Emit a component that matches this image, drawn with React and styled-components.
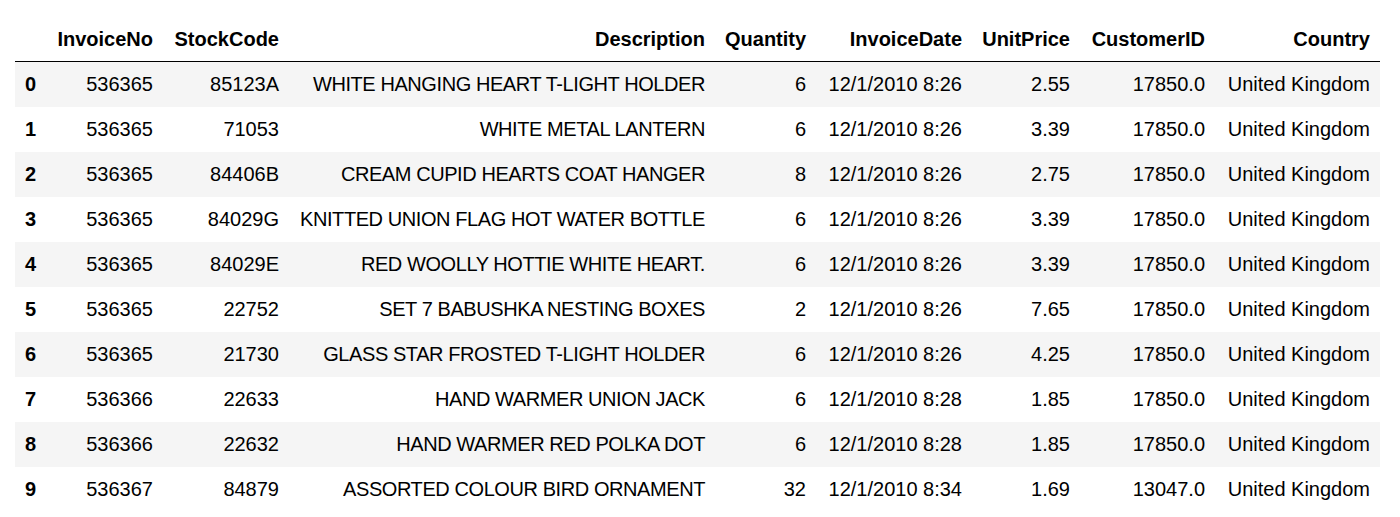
import React from "react";
import styled, { createGlobalStyle } from "styled-components";

const GlobalStyle = createGlobalStyle`
  html, body { margin: 0; padding: 0; background: #fff; }
  body { font-family: "Liberation Sans", Arial, Helvetica, sans-serif; color: #000; }
`;

const Page = styled.div`
  padding: 17px 20px 0 15px;
`;

const Table = styled.table`
  border-collapse: collapse;
  border-spacing: 0;
  table-layout: fixed;
  width: 1365px;
  font-size: 20px;
  color: #000;
`;

const HeadCell = styled.th`
  height: 44px;
  padding: 0 10px;
  text-align: right;
  font-weight: bold;
  vertical-align: middle;
  white-space: nowrap;
  border-bottom: 1px solid #000;
`;

const Row = styled.tr`
  background: ${(p) => (p.$striped ? "#f5f5f5" : "transparent")};
`;

const IndexCell = styled.th`
  height: 45px;
  padding: 0 10px;
  text-align: left;
  font-weight: bold;
  vertical-align: middle;
`;

const Cell = styled.td`
  height: 45px;
  padding: 0 10px;
  text-align: right;
  vertical-align: middle;
  white-space: nowrap;
  letter-spacing: ${(p) => (p.$caps ? "-0.42px" : "normal")};
`;

const columns = [
  { key: "idx", label: "", width: 31 },
  { key: "InvoiceNo", label: "InvoiceNo", width: 117 },
  { key: "StockCode", label: "StockCode", width: 126 },
  { key: "Description", label: "Description", width: 426 },
  { key: "Quantity", label: "Quantity", width: 101 },
  { key: "InvoiceDate", label: "InvoiceDate", width: 156 },
  { key: "UnitPrice", label: "UnitPrice", width: 108 },
  { key: "CustomerID", label: "CustomerID", width: 135 },
  { key: "Country", label: "Country", width: 165 },
];

const rows = [
  ["536365", "85123A", "WHITE HANGING HEART T-LIGHT HOLDER", "6", "12/1/2010 8:26", "2.55", "17850.0", "United Kingdom"],
  ["536365", "71053", "WHITE METAL LANTERN", "6", "12/1/2010 8:26", "3.39", "17850.0", "United Kingdom"],
  ["536365", "84406B", "CREAM CUPID HEARTS COAT HANGER", "8", "12/1/2010 8:26", "2.75", "17850.0", "United Kingdom"],
  ["536365", "84029G", "KNITTED UNION FLAG HOT WATER BOTTLE", "6", "12/1/2010 8:26", "3.39", "17850.0", "United Kingdom"],
  ["536365", "84029E", "RED WOOLLY HOTTIE WHITE HEART.", "6", "12/1/2010 8:26", "3.39", "17850.0", "United Kingdom"],
  ["536365", "22752", "SET 7 BABUSHKA NESTING BOXES", "2", "12/1/2010 8:26", "7.65", "17850.0", "United Kingdom"],
  ["536365", "21730", "GLASS STAR FROSTED T-LIGHT HOLDER", "6", "12/1/2010 8:26", "4.25", "17850.0", "United Kingdom"],
  ["536366", "22633", "HAND WARMER UNION JACK", "6", "12/1/2010 8:28", "1.85", "17850.0", "United Kingdom"],
  ["536366", "22632", "HAND WARMER RED POLKA DOT", "6", "12/1/2010 8:28", "1.85", "17850.0", "United Kingdom"],
  ["536367", "84879", "ASSORTED COLOUR BIRD ORNAMENT", "32", "12/1/2010 8:34", "1.69", "13047.0", "United Kingdom"],
];

export default function App() {
  return (
    <>
      <GlobalStyle />
      <Page>
        <Table>
          <colgroup>
            {columns.map((c) => (
              <col key={c.key} style={{ width: c.width }} />
            ))}
          </colgroup>
          <thead>
            <tr>
              {columns.map((c) => (
                <HeadCell key={c.key}>{c.label}</HeadCell>
              ))}
            </tr>
          </thead>
          <tbody>
            {rows.map((r, i) => (
              <Row key={i} $striped={i % 2 === 0}>
                <IndexCell>{i}</IndexCell>
                {r.map((v, j) => (
                  <Cell key={j} $caps={j === 2}>{v}</Cell>
                ))}
              </Row>
            ))}
          </tbody>
        </Table>
      </Page>
    </>
  );
}
